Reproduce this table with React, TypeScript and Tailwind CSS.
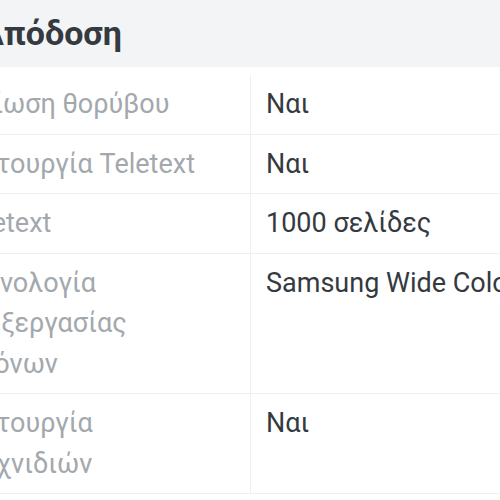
const ROWS: { label: string; value: string }[] = [
  { label: 'Μείωση θορύβου', value: 'Ναι' },
  { label: 'Λειτουργία Teletext', value: 'Ναι' },
  { label: 'Teletext', value: '1000 σελίδες' },
  { label: 'Τεχνολογία επεξεργασίας εικόνων', value: 'Samsung Wide Color Enhancer' },
  { label: 'Λειτουργία παιχνιδιών', value: 'Ναι' },
]

export default function App() {
  return (
    <div className="h-[500px] w-[500px] overflow-hidden bg-white font-['Roboto','Noto_Sans',sans-serif]">
      <div className="ml-[-60px] w-[760px]">
        {/* Section header */}
        <div className="flex h-[67px] items-center bg-[#f3f4f5] pl-[41px]">
          <h2 className="pb-[2px] text-[34px] font-bold leading-none text-[#343a40]">Απόδοση</h2>
        </div>

        {/* Spec table */}
        <div className="mt-[8px]">
          {ROWS.map((row) => (
            <div key={row.label} className="grid grid-cols-[311px_1fr] border-b border-[#eef0f1]">
              <div className="border-r border-[#eef0f1] py-[9px] pl-[16px] pr-[40px] text-[27px] leading-[40.5px] text-[#a3a8ad]">
                {row.label}
              </div>
              <div className="whitespace-nowrap py-[9px] pl-[15px] text-[27px] leading-[40.5px] text-[#343a40]">
                {row.value}
              </div>
            </div>
          ))}
        </div>
      </div>
    </div>
  )
}
